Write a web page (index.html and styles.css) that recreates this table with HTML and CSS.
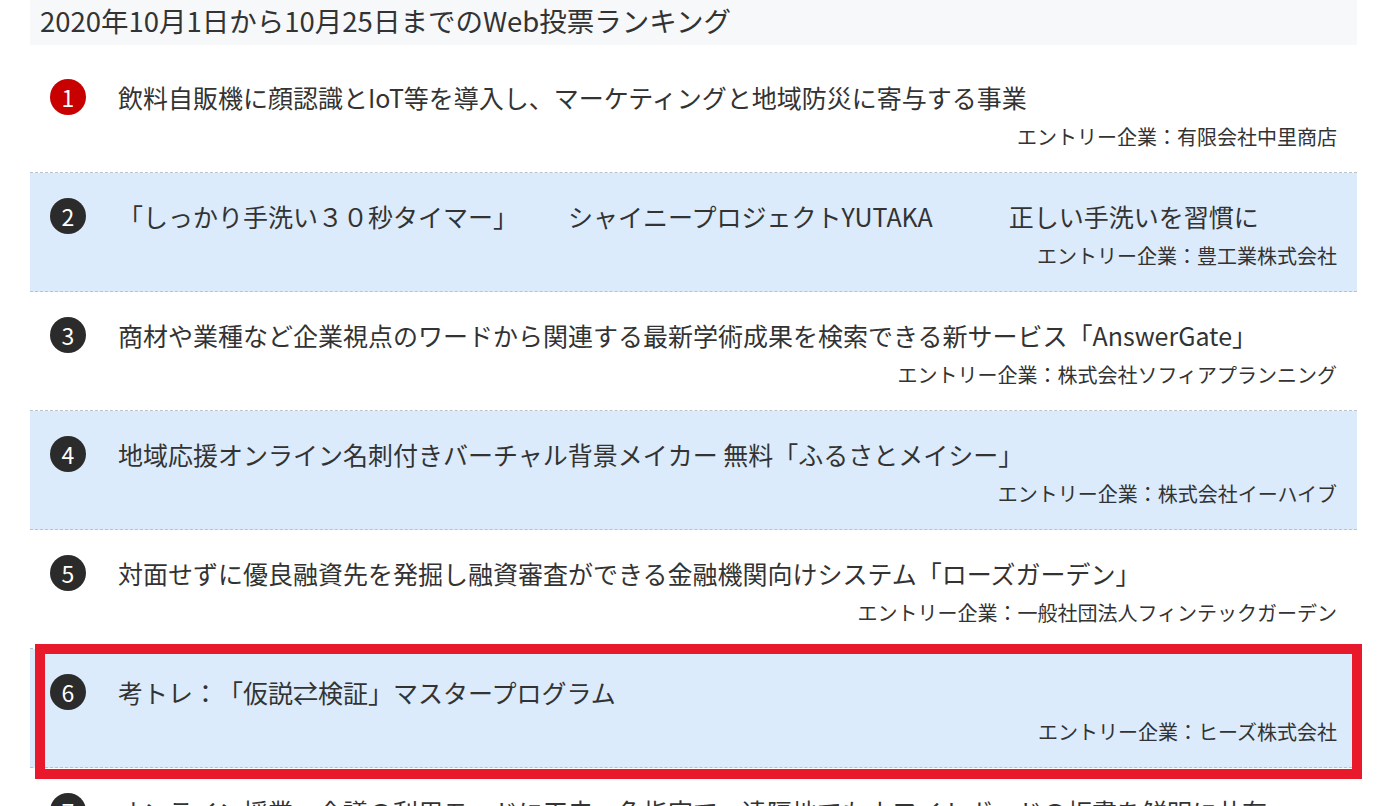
FILE: index.html
```html
<!DOCTYPE html>
<html lang="ja">

<head>
    <meta charset="UTF-8">
    <meta name="viewport" content="width=device-width, initial-scale=1.0">
    <title>Web投票ランキング</title>
    <link rel="stylesheet" href="styles.css">
</head>

<body>
    <div id="ranking">
        <!-- heading -->
        <h2 class="period">2020年10月1日から10月25日までのWeb投票ランキング</h2>

        <ul class="rank-list">
            <li class="rank-row">
                <div class="head">
                    <span class="num first">1</span>
                    <p class="title">飲料自販機に顔認識とIoT等を導入し、マーケティングと地域防災に寄与する事業</p>
                </div>
                <p class="entry">エントリー企業：有限会社中里商店</p>
            </li>
            <li class="rank-row blue">
                <div class="head">
                    <span class="num">2</span>
                    <p class="title">「しっかり手洗い３０秒タイマー」<span class="sp"></span>シャイニープロジェクトYUTAKA<span class="sp wide"></span>正しい手洗いを習慣に</p>
                </div>
                <p class="entry">エントリー企業：豊工業株式会社</p>
            </li>
            <li class="rank-row">
                <div class="head">
                    <span class="num">3</span>
                    <p class="title">商材や業種など企業視点のワードから関連する最新学術成果を検索できる新サービス「AnswerGate」</p>
                </div>
                <p class="entry">エントリー企業：株式会社ソフィアプランニング</p>
            </li>
            <li class="rank-row blue">
                <div class="head">
                    <span class="num">4</span>
                    <p class="title">地域応援オンライン名刺付きバーチャル背景メイカー 無料「ふるさとメイシー」</p>
                </div>
                <p class="entry">エントリー企業：株式会社イーハイブ</p>
            </li>
            <li class="rank-row">
                <div class="head">
                    <span class="num">5</span>
                    <p class="title">対面せずに優良融資先を発掘し融資審査ができる金融機関向けシステム「ローズガーデン」</p>
                </div>
                <p class="entry">エントリー企業：一般社団法人フィンテックガーデン</p>
            </li>
            <li class="rank-row blue marked">
                <div class="head">
                    <span class="num">6</span>
                    <p class="title">考トレ：「仮説⇄検証」マスタープログラム</p>
                </div>
                <p class="entry">エントリー企業：ヒーズ株式会社</p>
            </li>
            <li class="rank-row">
                <div class="head">
                    <span class="num">7</span>
                    <p class="title">オンライン授業、会議の利用モードに工夫、色指定で、遠隔地でもホワイトボードの板書を鮮明に共有</p>
                </div>
                <p class="entry">エントリー企業：株式会社</p>
            </li>
        </ul>
    </div>
</body>

</html>
```

FILE: styles.css
```css
* {
    margin: 0;
    padding: 0;
    box-sizing: border-box;
}

body,
html {
    width: 100%;
    font-family: "Noto Sans CJK JP", "Noto Sans", sans-serif;
    color: #333;
    background: #fff;
    overflow: hidden;
    text-spacing-trim: space-all;
}

#ranking {
    width: 1327px;
    margin-left: 30px;
}

.period {
    height: 45px;
    padding-left: 10px;
    background-color: #f7f8fa;
    font-size: 27.5px;
    font-weight: normal;
    line-height: 40px;
    color: #333;
}

.rank-list {
    list-style: none;
    margin-top: 9px;
}

.rank-row {
    position: relative;
    height: 119px;
    padding: 25px 20px 0 20px;
    border-bottom: 1px dashed #b9c3cc;
    display: flex;
    flex-direction: column;
}

.rank-row.blue {
    background-color: #dbebfb;
}

.head {
    display: flex;
    align-items: center;
    gap: 32px;
    height: 36px;
}

.num {
    flex: none;
    width: 36px;
    height: 36px;
    border-radius: 50%;
    background-color: #2b2b2b;
    color: #fff;
    font-size: 23px;
    line-height: 36px;
    text-align: center;
}

.num.first {
    background-color: #c90000;
}

.title {
    font-size: 25px;
    line-height: 36px;
    white-space: nowrap;
}

.sp {
    display: inline-block;
    width: 50px;
}

.sp.wide {
    width: 76px;
}

.entry {
    margin-top: 7px;
    font-size: 20px;
    line-height: 30px;
    text-align: right;
}

/* red marker drawn over the 6th row */
.rank-row.marked::after {
    content: "";
    position: absolute;
    top: -5px;
    left: 5px;
    right: -5px;
    bottom: -12px;
    border: 10px solid #e8192a;
    pointer-events: none;
}
```
